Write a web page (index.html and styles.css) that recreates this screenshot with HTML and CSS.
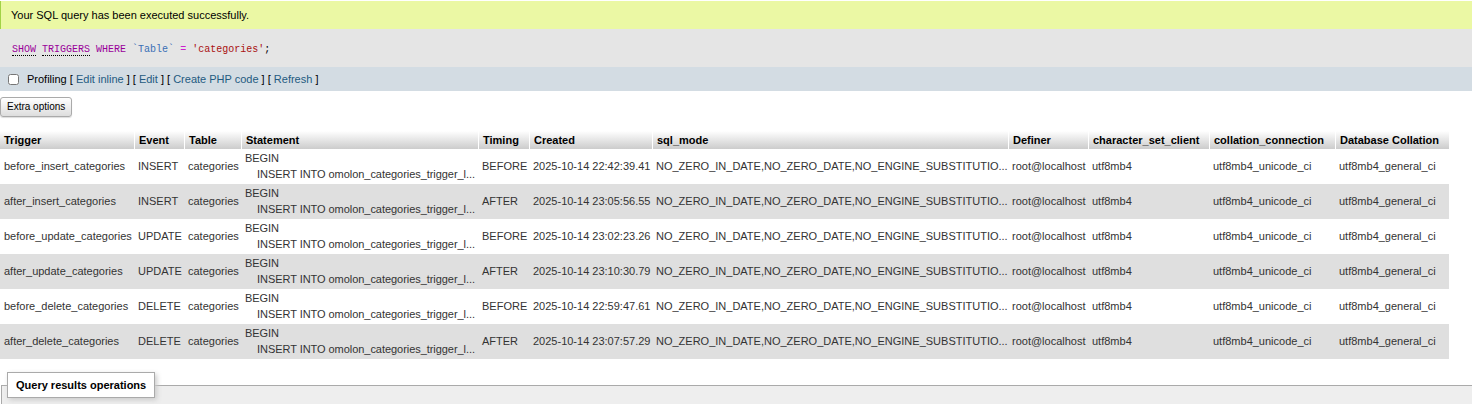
FILE: index.html
```html
<!DOCTYPE html>
<html>
<head>
<meta charset="utf-8">
<link rel="stylesheet" href="styles.css">
</head>
<body>
<div class="success">Your SQL query has been executed successfully.</div>
<div class="sql"><code><span class="kw doc">SHOW</span> <span class="kw doc">TRIGGERS</span> <span class="kw">WHERE</span> <span class="ident">`Table`</span> <span class="op">=</span> <span class="str">'categories'</span>;</code></div>
<div class="tools"><input type="checkbox" class="chk"><span class="lbl">Profiling</span> [ <a>Edit inline</a> ] [ <a>Edit</a> ] [ <a>Create PHP code</a> ] [ <a>Refresh</a> ]</div>
<div class="extra"><button class="btn">Extra options</button></div>
<table class="res">
  <thead>
    <tr>
      <th class="c1">Trigger</th>
      <th class="c2">Event</th>
      <th class="c3">Table</th>
      <th class="c4">Statement</th>
      <th class="c5">Timing</th>
      <th class="c6">Created</th>
      <th class="c7">sql_mode</th>
      <th class="c8">Definer</th>
      <th class="c9">character_set_client</th>
      <th class="c10">collation_connection</th>
      <th class="c11">Database Collation</th>
    </tr>
  </thead>
  <tbody>
    <tr>
      <td>before_insert_categories</td><td>INSERT</td><td>categories</td>
      <td class="stmt">BEGIN
    INSERT INTO omolon_categories_trigger_l...</td>
      <td>BEFORE</td><td>2025-10-14 22:42:39.41</td><td>NO_ZERO_IN_DATE,NO_ZERO_DATE,NO_ENGINE_SUBSTITUTIO...</td>
      <td>root@localhost</td><td>utf8mb4</td><td>utf8mb4_unicode_ci</td><td>utf8mb4_general_ci</td>
    </tr>
    <tr>
      <td>after_insert_categories</td><td>INSERT</td><td>categories</td>
      <td class="stmt">BEGIN
    INSERT INTO omolon_categories_trigger_l...</td>
      <td>AFTER</td><td>2025-10-14 23:05:56.55</td><td>NO_ZERO_IN_DATE,NO_ZERO_DATE,NO_ENGINE_SUBSTITUTIO...</td>
      <td>root@localhost</td><td>utf8mb4</td><td>utf8mb4_unicode_ci</td><td>utf8mb4_general_ci</td>
    </tr>
    <tr>
      <td>before_update_categories</td><td>UPDATE</td><td>categories</td>
      <td class="stmt">BEGIN
    INSERT INTO omolon_categories_trigger_l...</td>
      <td>BEFORE</td><td>2025-10-14 23:02:23.26</td><td>NO_ZERO_IN_DATE,NO_ZERO_DATE,NO_ENGINE_SUBSTITUTIO...</td>
      <td>root@localhost</td><td>utf8mb4</td><td>utf8mb4_unicode_ci</td><td>utf8mb4_general_ci</td>
    </tr>
    <tr>
      <td>after_update_categories</td><td>UPDATE</td><td>categories</td>
      <td class="stmt">BEGIN
    INSERT INTO omolon_categories_trigger_l...</td>
      <td>AFTER</td><td>2025-10-14 23:10:30.79</td><td>NO_ZERO_IN_DATE,NO_ZERO_DATE,NO_ENGINE_SUBSTITUTIO...</td>
      <td>root@localhost</td><td>utf8mb4</td><td>utf8mb4_unicode_ci</td><td>utf8mb4_general_ci</td>
    </tr>
    <tr>
      <td>before_delete_categories</td><td>DELETE</td><td>categories</td>
      <td class="stmt">BEGIN
    INSERT INTO omolon_categories_trigger_l...</td>
      <td>BEFORE</td><td>2025-10-14 22:59:47.61</td><td>NO_ZERO_IN_DATE,NO_ZERO_DATE,NO_ENGINE_SUBSTITUTIO...</td>
      <td>root@localhost</td><td>utf8mb4</td><td>utf8mb4_unicode_ci</td><td>utf8mb4_general_ci</td>
    </tr>
    <tr>
      <td>after_delete_categories</td><td>DELETE</td><td>categories</td>
      <td class="stmt">BEGIN
    INSERT INTO omolon_categories_trigger_l...</td>
      <td>AFTER</td><td>2025-10-14 23:07:57.29</td><td>NO_ZERO_IN_DATE,NO_ZERO_DATE,NO_ENGINE_SUBSTITUTIO...</td>
      <td>root@localhost</td><td>utf8mb4</td><td>utf8mb4_unicode_ci</td><td>utf8mb4_general_ci</td>
    </tr>
  </tbody>
</table>
<fieldset class="ops">
  <legend class="ops-legend">Query results operations</legend>
</fieldset>
</body>
</html>
```
FILE: styles.css
```css
html, body {
  overflow: hidden;
}
body {
  margin: 0;
  font-family: "Liberation Sans", Arial, sans-serif;
  font-size: 11px;
  color: #444;
  background: #fff;
}
.success {
  margin-top: 1px;
  height: 28px;
  line-height: 28px;
  padding-left: 10px;
  background: #ebf8a4;
  border-left: 1px solid #a2d246;
  color: #000;
}
.sql {
  height: 38px;
  line-height: 38px;
  padding-left: 12px;
  background: #e5e5e5;
}
.sql code {
  font-family: "Liberation Mono", monospace;
  font-size: 10px;
  color: #000;
}
.kw { color: #990099; }
.doc {
  border-bottom: 1px dotted #000;
  line-height: 1;
}
.ident { color: #3a6fb5; }
.op { color: #cc22cc; }
.str { color: #aa1111; }
.tools {
  height: 24px;
  line-height: 24px;
  background: #d3dce3;
  color: #000;
  white-space: nowrap;
}
.chk {
  margin: 0 8px 0 8px;
  width: 11px;
  height: 11px;
  vertical-align: middle;
  position: relative;
  top: -1px;
}
.tools a { color: #235a81; }
.extra {
  padding-top: 6px;
  line-height: 0;
}
.btn {
  margin: 0;
  height: 20px;
  padding: 0 6px;
  font-family: "Liberation Sans", Arial, sans-serif;
  font-size: 10px;
  line-height: 18px;
  color: #000;
  border: 1px solid #aaa;
  border-radius: 3px;
  background: linear-gradient(#ffffff, #dddddd);
  box-shadow: 0 1px 1px #ddd;
}
.res {
  margin-top: 14px;
  border-collapse: separate;
  border-spacing: 0;
  table-layout: fixed;
  width: 1449px;
}
.res th {
  box-sizing: border-box;
  height: 18px;
  padding: 0 3px 0 4px;
  text-align: left;
  font-weight: bold;
  color: #000;
  background: linear-gradient(#ffffff, #cccccc);
  border-right: 1px solid #fff;
  white-space: nowrap;
}
.res th.c11 { border-right: 0; }
.res td {
  height: 35px;
  box-sizing: border-box;
  padding: 0 3px 2px 4px;
  vertical-align: middle;
  white-space: nowrap;
  color: #333;
}
.res td + td { padding-left: 3px; }
.res tbody tr:nth-child(even) td { background: #dfdfdf; }
.res td.stmt {
  white-space: pre;
  line-height: 16px;
  padding-top: 0;
  padding-bottom: 2px;
  letter-spacing: -0.05px;
}
.c1 { width: 135px; }
.c2 { width: 50px; }
.c3 { width: 57px; }
.c4 { width: 237px; }
.c5 { width: 51px; }
.c6 { width: 123px; }
.c7 { width: 356px; }
.c8 { width: 80px; }
.c9 { width: 121px; }
.c10 { width: 126px; }
.c11 { width: 113px; }
.ops {
  margin: 13px 0 0 1px;
  padding: 0 5px 6px 5px;
  border: 1px solid #aaa;
  border-right: 0;
  border-bottom: 0;
  background: #eee;
}
.ops-legend {
  padding: 6px 8px;
  background: #fff;
  border: 1px solid #aaa;
  font-weight: bold;
  color: #000;
  box-shadow: 2px 2px 5px #ccc;
}
```
